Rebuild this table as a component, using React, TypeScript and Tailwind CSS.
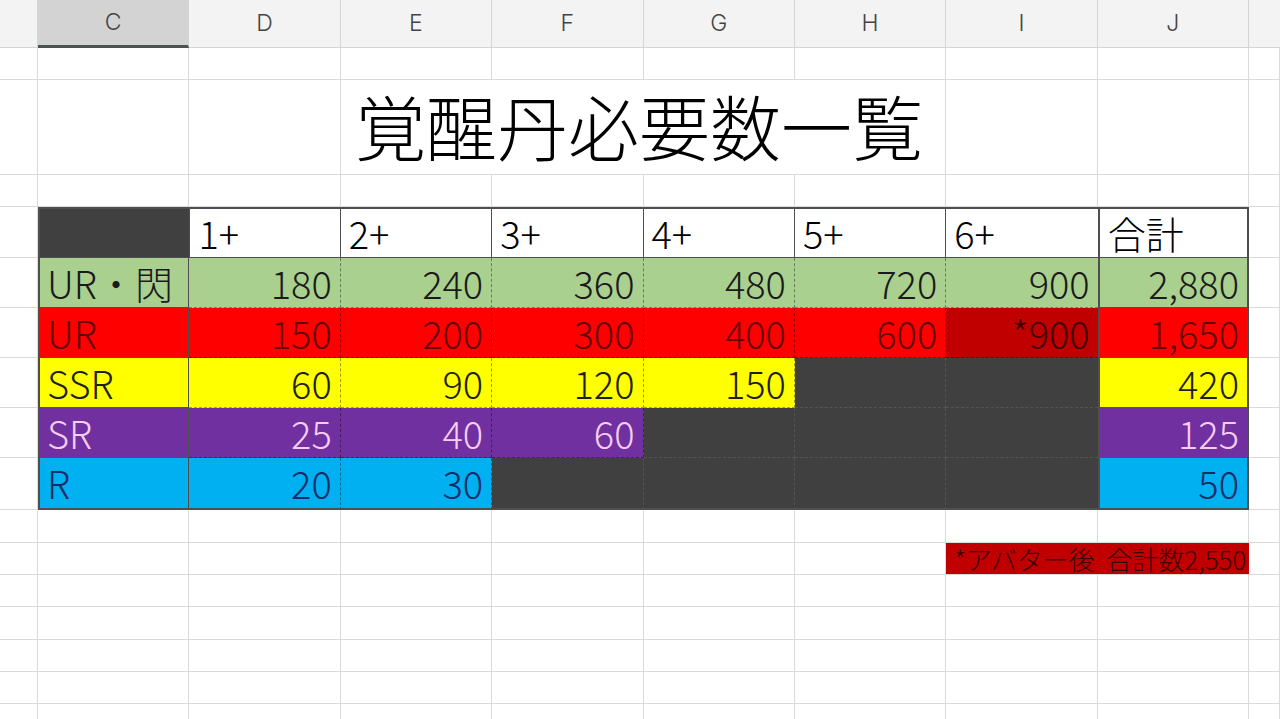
import React from 'react';

const COLS = 'grid grid-cols-[38px_repeat(8,151.375px)_1fr]';
const LETTERS = ['C', 'D', 'E', 'F', 'G', 'H', 'I', 'J'];
const LINE = 'border-r border-b border-[#dadada]';

type Rank = {
  label: string;
  bg: string;
  text: string;
  vals: (string | null)[];
  total: string;
};

const ranks: Rank[] = [
  { label: 'UR・閃', bg: 'bg-[#a9d08e]', text: 'text-[#1a1a1a]', vals: ['180', '240', '360', '480', '720', '900'], total: '2,880' },
  { label: 'UR', bg: 'bg-[#ff0000]', text: 'text-[#650000]', vals: ['150', '200', '300', '400', '600', '*900'], total: '1,650' },
  { label: 'SSR', bg: 'bg-[#ffff00]', text: 'text-[#1f1f1f]', vals: ['60', '90', '120', '150', null, null], total: '420' },
  { label: 'SR', bg: 'bg-[#7030a0]', text: 'text-[#f6cdf2]', vals: ['25', '40', '60', null, null, null], total: '125' },
  { label: 'R', bg: 'bg-[#00b0f0]', text: 'text-[#152c6b]', vals: ['20', '30', null, null, null, null], total: '50' },
];

function EmptyRow({ h }: { h: string }) {
  return (
    <div className={`${COLS} ${h}`}>
      {Array.from({ length: 10 }).map((_, i) => (
        <div key={i} className={LINE} />
      ))}
    </div>
  );
}

export default function App() {
  return (
    <div className="w-[1280px] h-[719px] overflow-hidden bg-white font-['Noto_Sans_CJK_JP',sans-serif] font-light text-black">
      {/* column letters */}
      <div className={`${COLS} h-[48px] bg-[#f3f3f3] font-['Inter',sans-serif] font-light text-[23px] text-[#444]`}>
        <div className="border-r border-b border-[#d4d4d4]" />
        {LETTERS.map((l) => (
          <div
            key={l}
            className={
              l === 'C'
                ? 'flex items-center justify-center bg-[#d3d3d3] border-r border-[#d4d4d4] border-b-[3px] border-b-[#4b5252]'
                : 'flex items-center justify-center border-r border-b border-[#d4d4d4]'
            }
          >
            {l}
          </div>
        ))}
        <div className="border-b border-[#d4d4d4]" />
      </div>

      <EmptyRow h="h-[32px]" />

      {/* title */}
      <div className={`${COLS} h-[95px]`}>
        <div className={LINE} />
        <div className={LINE} />
        <div className={LINE} />
        <div className={`${LINE} col-span-4 flex items-center justify-center text-[71px] leading-none pr-2 pb-[6px]`}>
          覚醒丹必要数一覧
        </div>
        <div className={LINE} />
        <div className={LINE} />
        <div className={LINE} />
      </div>

      <EmptyRow h="h-[32px]" />

      {/* table header */}
      <div className={`${COLS} h-[51px] text-[38px] leading-none`}>
        <div className={LINE} />
        <div className="bg-[#404040] border-t-2 border-l-2 border-b border-[#4f4f4f]" />
        {['1+', '2+', '3+', '4+', '5+', '6+'].map((h, i) => (
          <div
            key={h}
            className={`flex items-center pl-2 border-t-2 border-b border-[#4f4f4f] ${i === 0 ? 'border-l' : ''} ${i < 5 ? 'border-r' : ''}`}
          >
            {h}
          </div>
        ))}
        <div className="flex items-center pl-2 border-t-2 border-l-2 border-r-2 border-b border-[#4f4f4f]">合計</div>
        <div className={LINE} />
      </div>

      {/* table body */}
      {ranks.map((r, ri) => {
        const last = ri === ranks.length - 1;
        const bottom = last ? 'border-b-2 border-b-[#4f4f4f]' : 'border-b border-b-[#4f4f4f]';
        return (
          <div key={r.label} className={`${COLS} ${last ? 'h-[52px]' : 'h-[50px]'} text-[38px] leading-none`}>
            <div className={LINE} />
            <div className={`${r.bg} ${r.text} ${bottom} flex items-center pl-[7px] border-l-2 border-r border-[#4f4f4f]`}>
              {r.label}
            </div>
            {r.vals.map((v, vi) => {
              const dark = v === null;
              const special = v === '*900';
              const bg = dark ? 'bg-[#404040]' : special ? 'bg-[#c00000] text-[#420000]' : `${r.bg} ${r.text}`;
              const right = vi < 5 ? `border-r [border-right-style:dashed] ${dark ? 'border-r-white/10' : 'border-r-black/40'}` : '';
              const bot = last
                ? 'border-b-2 border-b-[#4f4f4f]'
                : `border-b [border-bottom-style:dashed] ${dark ? 'border-b-white/10' : 'border-b-black/35'}`;
              return (
                <div key={vi} className={`${bg} ${right} ${bot} flex items-center justify-end pr-2`}>
                  {v}
                </div>
              );
            })}
            <div className={`${r.bg} ${r.text} ${bottom} flex items-center justify-end pr-2 border-l-2 border-r-2 border-[#4f4f4f]`}>
              {r.total}
            </div>
            <div className={LINE} />
          </div>
        );
      })}

      <EmptyRow h="h-[33px]" />

      {/* footnote */}
      <div className={`${COLS} h-[32px]`}>
        {Array.from({ length: 7 }).map((_, i) => (
          <div key={i} className={LINE} />
        ))}
        <div className="col-span-2 bg-[#c00000] text-[#3e0000] text-[26px] leading-none flex items-center pl-2 border-b border-[#dadada]">
          *アバター後&nbsp;&nbsp;合計数2,550
        </div>
        <div className={LINE} />
      </div>

      <EmptyRow h="h-[32px]" />
      <EmptyRow h="h-[33px]" />
      <EmptyRow h="h-[32px]" />
      <EmptyRow h="h-[32px]" />
      <EmptyRow h="h-[32px]" />
    </div>
  );
}
